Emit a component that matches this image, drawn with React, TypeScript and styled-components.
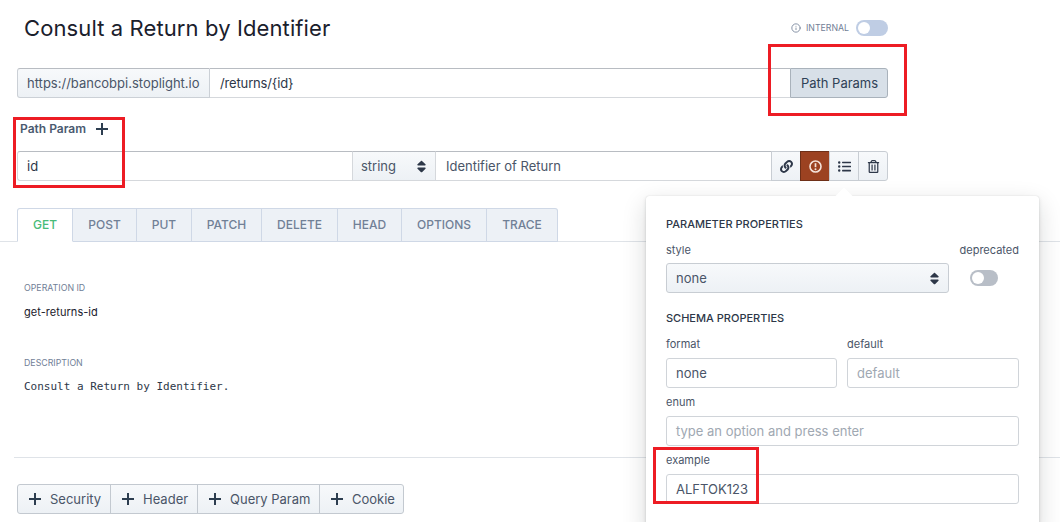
import React from "react";
import styled, { createGlobalStyle } from "styled-components";
import { FaLink, FaRegTrashAlt, FaListUl, FaSort } from "react-icons/fa";
import { FiInfo } from "react-icons/fi";

const Global = createGlobalStyle`
  html, body { margin: 0; padding: 0; background: #fff; }
  body { font-family: Inter, "Liberation Sans", sans-serif; color: #2d3748; overflow: hidden; }
  * { box-sizing: border-box; }
`;

const Page = styled.div`
  position: relative;
  width: 1060px;
  height: 522px;
  overflow: hidden;
`;

const Header = styled.div`
  width: 888px;
  height: 68px;
  padding: 15px 0 0 24px;
  display: flex;
  justify-content: space-between;
  align-items: flex-start;
`;

const Title = styled.h1`
  margin: 0;
  font-size: 22px;
  line-height: 26px;
  font-weight: 400;
  letter-spacing: 0.11px;
  color: #1a202c;
`;

const Internal = styled.div`
  display: flex;
  align-items: center;
  margin-top: 5px;
  color: #718096;
  font-size: 8.75px;
  gap: 5px;
`;

const Track = styled.span<{ $color: string; $w: number }>`
  display: inline-flex;
  align-items: center;
  width: ${(p) => p.$w}px;
  height: 16px;
  border-radius: 8px;
  background: ${(p) => p.$color};
  padding: 2px;
  &::before {
    content: "";
    width: 12px;
    height: 12px;
    border-radius: 50%;
    background: #fff;
  }
`;

const TrackGap = styled.span`
  margin-left: 2px;
  display: inline-flex;
`;

const Group = styled.div`
  margin-left: 17px;
  width: 871px;
  height: 30px;
  display: flex;
  font-size: 13px;
  color: #4a5568;
`;

const Addon = styled.div`
  display: flex;
  align-items: center;
  height: 30px;
  padding: 0 9px;
  width: 193px;
  background: linear-gradient(#f7f9fb, #edf1f5);
  border: 1px solid #cbd0d6;
  border-top-color: #b8bcc2;
  border-radius: 3px 0 0 3px;
  white-space: nowrap;
`;

const Field = styled.div<{ $grow?: boolean; $width?: number; $rounded?: boolean; $muted?: boolean }>`
  display: flex;
  align-items: center;
  height: 30px;
  flex: ${(p) => (p.$grow ? "1" : "none")};
  width: ${(p) => (p.$width ? `${p.$width}px` : "auto")};
  padding: 0 10px 0 ${(p) => (p.$rounded ? "9px" : "10px")};
  background: #fff;
  border: 1px solid #d5d8dc;
  border-top-color: #b8bcc2;
  border-left-width: ${(p) => (p.$rounded ? "1px" : "0")};
  border-right-width: 0;
  border-radius: ${(p) => (p.$rounded ? "3px 0 0 3px" : "0")};
  color: ${(p) => (p.$muted ? "#4a5568" : "#2d3748")};
`;

const PathText = styled.span`
  letter-spacing: -0.15px;
`;

const ActiveButton = styled.div`
  display: flex;
  align-items: center;
  justify-content: center;
  width: 98px;
  height: 30px;
  padding-left: 1px;
  background: #d8e0e8;
  border: 1px solid #a9b2bb;
  border-radius: 0 3px 3px 0;
  color: #2f4156;
`;

const ParamLabel = styled.div`
  margin: 23px 0 0 20px;
  height: 30px;
  display: flex;
  align-items: flex-start;
  gap: 10px;
  font-size: 12px;
  font-weight: 600;
  line-height: 16px;
  color: #4a5a70;
  svg { margin-top: 2px; }
`;

const SelectBox = styled.div`
  display: flex;
  align-items: center;
  justify-content: space-between;
  width: 84px;
  height: 30px;
  padding: 0 6px 0 8px;
  background: linear-gradient(#f7f9fb, #edf1f5);
  border: 1px solid #d5d8dc;
  border-top-color: #b8bcc2;
  color: #4a5568;
  svg { color: #2d3748; font-size: 15px; }
`;

const IconBtn = styled.div<{ $danger?: boolean; $last?: boolean }>`
  display: flex;
  align-items: center;
  justify-content: center;
  width: 30px;
  height: 30px;
  font-size: 13px;
  background: ${(p) => (p.$danger ? "#9c4221" : "linear-gradient(#f7f9fb, #edf1f5)")};
  color: ${(p) => (p.$danger ? "#f5e3da" : "#2d3748")};
  border: 1px solid ${(p) => (p.$danger ? "#6e2f17" : "#c8cdd3")};
  border-radius: ${(p) => (p.$last ? "0 3px 3px 0" : "0")};
  margin-left: -1px;
  &:first-child { margin-left: 0; }
`;

const IconRow = styled.div`
  display: flex;
`;

const Tabs = styled.div`
  margin-top: 27px;
  height: 34px;
  padding-left: 17px;
  display: flex;
  border-bottom: 1px solid #dfe3e8;
`;

const Tab = styled.div<{ $active?: boolean; $w: number }>`
  width: ${(p) => p.$w}px;
  height: 34px;
  display: flex;
  align-items: center;
  justify-content: center;
  padding-bottom: 2px;
  font-size: 12px;
  font-weight: 500;
  background: ${(p) => (p.$active ? "#fff" : "#edf1f6")};
  color: ${(p) => (p.$active ? "#48bb78" : "#718096")};
  border: 1px solid #cfd8e6;
  border-left-width: ${(p) => (p.$active ? "1px" : "0")};
  border-bottom-color: ${(p) => (p.$active ? "#fff" : "#cfd8e6")};
  border-radius: ${(p) => (p.$active ? "3px 0 0 0" : "0")};
  &:last-child { border-radius: 0 3px 0 0; }
`;

const Meta = styled.div`
  padding: 41px 0 0 24px;
  height: 215px;
`;

const MetaLabel = styled.div`
  font-size: 8.8px;
  line-height: 10px;
  color: #718096;
  text-transform: uppercase;
`;

const MetaValue = styled.div`
  margin-top: 12px;
  font-size: 11px;
  letter-spacing: 0.05px;
  line-height: 14px;
  color: #1a202c;
  margin-bottom: 39px;
`;

const Mono = styled.div`
  margin-top: 12px;
  font-family: "DejaVu Sans Mono", monospace;
  font-size: 11px;
  line-height: 14px;
  color: #2d3748;
`;

const Rule = styled.div`
  margin-left: 14px;
  height: 1px;
  background: #dfe3e8;
`;

const AddGroup = styled.div`
  margin: 26px 0 0 17px;
  display: inline-flex;
  height: 30px;
  border: 1px solid #c3c9d0;
  border-radius: 3px;
  background: linear-gradient(#f7f9fb, #edf1f5);
`;

const AddButton = styled.div<{ $w: number }>`
  display: flex;
  align-items: center;
  gap: 9px;
  width: ${(p) => p.$w}px;
  padding-left: 11px;
  font-size: 13px;
  color: #4a5568;
  border-left: 1px solid #c3c9d0;
  &:first-child { border-left: 0; }
`;

const Popover = styled.div`
  position: absolute;
  left: 646px;
  top: 196px;
  width: 393px;
  height: 340px;
  padding: 21px 20px 0 20px;
  background: #fff;
  border-radius: 3px;
  box-shadow: 0 0 1px rgba(16,22,26,.2), 0 2px 4px rgba(16,22,26,.12), 0 8px 24px rgba(16,22,26,.16);
  font-size: 11px;
  color: #4a5568;
  &::before {
    content: "";
    position: absolute;
    left: 192px;
    top: -6px;
    width: 12px;
    height: 12px;
    background: #fff;
    transform: rotate(45deg);
  }
`;

const SectionTitle = styled.div`
  font-size: 11px;
  line-height: 14px;
  font-weight: 500;
  color: #2d3748;
`;

const FormGrid = styled.div<{ $cols: string; $top: number }>`
  display: grid;
  grid-template-columns: ${(p) => p.$cols};
  column-gap: 10px;
  margin-top: ${(p) => p.$top}px;
`;

const FieldLabel = styled.div<{ $gap?: number }>`
  font-size: 11px;
  line-height: 14px;
  margin-bottom: ${(p) => p.$gap ?? 7}px;
  color: #4a5568;
`;

const Input = styled.div<{ $placeholder?: boolean }>`
  display: flex;
  align-items: center;
  height: 30px;
  padding: 0 9px;
  font-size: 13px;
  border: 1px solid #d0d4d9;
  border-radius: 3px;
  color: ${(p) => (p.$placeholder ? "#a0a8b2" : "#4a5568")};
`;

const PopSelect = styled.div`
  display: flex;
  align-items: center;
  justify-content: space-between;
  height: 30px;
  padding: 0 6px 0 9px;
  font-size: 13px;
  border: 1px solid #c8cdd3;
  border-radius: 3px;
  background: linear-gradient(#f7f9fb, #edf1f5);
  svg { color: #2d3748; font-size: 15px; }
`;

const DepCol = styled.div`
  display: flex;
  flex-direction: column;
  align-items: flex-end;
`;

const SwitchSlot = styled.div`
  width: 59px;
  height: 30px;
  display: flex;
  align-items: center;
  padding-left: 10px;
`;

const Schema = styled.div`
  margin-top: 18px;
`;

const Redbox = styled.div<{ $x: number; $y: number; $w: number; $h: number }>`
  position: absolute;
  left: ${(p) => p.$x}px;
  top: ${(p) => p.$y}px;
  width: ${(p) => p.$w}px;
  height: ${(p) => p.$h}px;
  border: 3px solid #ed1c24;
  pointer-events: none;
`;

const Plus = () => (
  <svg width={12} height={12} viewBox="0 0 12 12" fill="none">
    <path d="M6 0v12M0 6h12" stroke="#2d3e50" strokeWidth="2" />
  </svg>
);

const Alert = () => (
  <svg width="13" height="13" viewBox="0 0 13 13" fill="none">
    <circle cx="6.5" cy="6.5" r="5.5" stroke="currentColor" strokeWidth="1.6" />
    <path d="M6.5 3.2v4" stroke="currentColor" strokeWidth="1.7" />
    <circle cx="6.5" cy="9.3" r="1" fill="currentColor" />
  </svg>
);

const tabs: [string, number][] = [
  ["POST", 64], ["PUT", 55], ["PATCH", 70], ["DELETE", 76],
  ["HEAD", 64], ["OPTIONS", 85], ["TRACE", 71],
];

export default function App() {
  return (
    <Page>
      <Global />
      <Header>
        <Title>Consult a Return by Identifier</Title>
        <Internal>
          <FiInfo size={10} />
          <span>INTERNAL</span>
          <TrackGap><Track $color="#bfcde4" $w={32} /></TrackGap>
        </Internal>
      </Header>

      <Group>
        <Addon>https://bancobpi.stoplight.io</Addon>
        <Field $grow><PathText>/returns/{"{id}"}</PathText></Field>
        <ActiveButton>Path Params</ActiveButton>
      </Group>

      <ParamLabel>
        <span>Path Param</span>
        <Plus />
      </ParamLabel>

      <Group>
        <Field $rounded $width={335}>id</Field>
        <SelectBox>
          <span>string</span>
          <FaSort />
        </SelectBox>
        <Field $grow $muted>Identifier of Return</Field>
        <IconRow>
          <IconBtn><FaLink /></IconBtn>
          <IconBtn $danger><Alert /></IconBtn>
          <IconBtn><FaListUl /></IconBtn>
          <IconBtn $last><FaRegTrashAlt /></IconBtn>
        </IconRow>
      </Group>

      <Tabs>
        <Tab $active $w={56}>GET</Tab>
        {tabs.map(([t, w]) => <Tab key={t} $w={w}>{t}</Tab>)}
      </Tabs>

      <Meta>
        <MetaLabel>Operation ID</MetaLabel>
        <MetaValue>get-returns-id</MetaValue>
        <MetaLabel>Description</MetaLabel>
        <Mono>Consult a Return by Identifier.</Mono>
      </Meta>
      <Rule />

      <AddGroup>
        <AddButton $w={92}><Plus />Security</AddButton>
        <AddButton $w={87}><Plus />Header</AddButton>
        <AddButton $w={122}><Plus />Query Param</AddButton>
        <AddButton $w={84}><Plus />Cookie</AddButton>
      </AddGroup>

      <Popover>
        <SectionTitle>PARAMETER PROPERTIES</SectionTitle>
        <FormGrid $cols="283px 1fr" $top={12}>
          <div>
            <FieldLabel $gap={6}>style</FieldLabel>
            <PopSelect><span>none</span><FaSort /></PopSelect>
          </div>
          <DepCol>
            <FieldLabel $gap={6}>deprecated</FieldLabel>
            <SwitchSlot><Track $color="#b8bec7" $w={28} /></SwitchSlot>
          </DepCol>
        </FormGrid>
        <Schema>
          <SectionTitle>SCHEMA PROPERTIES</SectionTitle>
          <FormGrid $cols="171px 172px" $top={12}>
            <div>
              <FieldLabel>format</FieldLabel>
              <Input>none</Input>
            </div>
            <div>
              <FieldLabel>default</FieldLabel>
              <Input $placeholder>default</Input>
            </div>
          </FormGrid>
          <FormGrid $cols="1fr" $top={7}>
            <div>
              <FieldLabel>enum</FieldLabel>
              <Input $placeholder>type an option and press enter</Input>
            </div>
          </FormGrid>
          <FormGrid $cols="1fr" $top={7}>
            <div>
              <FieldLabel>example</FieldLabel>
              <Input>ALFTOK123</Input>
            </div>
          </FormGrid>
        </Schema>
      </Popover>

      <Redbox $x={768} $y={44} $w={139} $h={72} />
      <Redbox $x={13} $y={117} $w={112} $h={71} />
      <Redbox $x={653} $y={447} $w={106} $h={57} />
    </Page>
  );
}
